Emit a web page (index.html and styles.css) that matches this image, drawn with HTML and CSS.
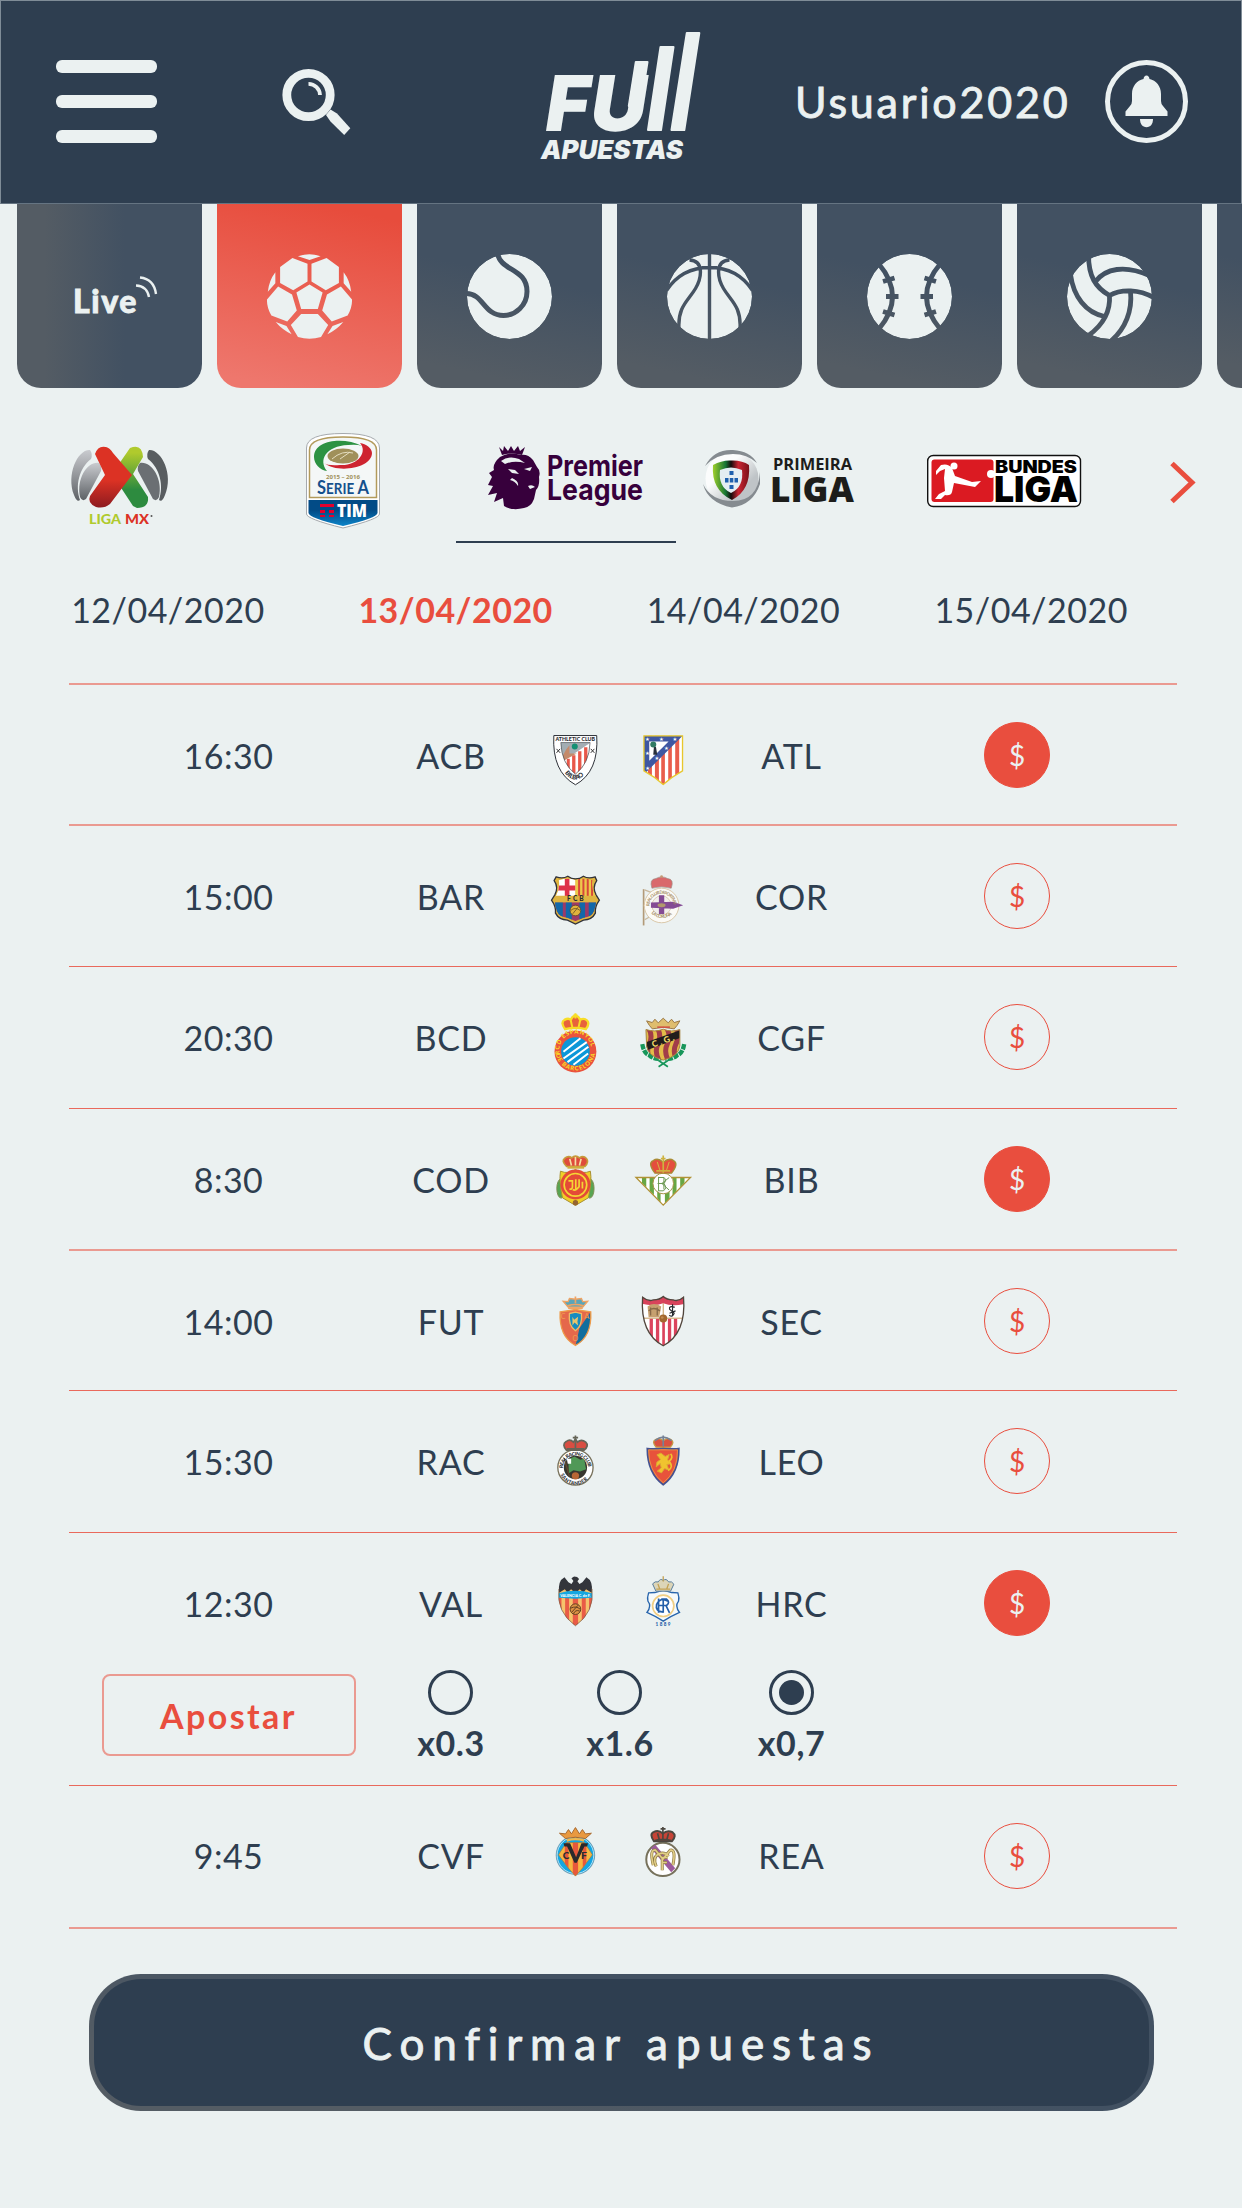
FILE: index.html
```html
<!DOCTYPE html>
<html lang="es">
<head>
<meta charset="utf-8">
<title>Full Apuestas</title>
<link rel="stylesheet" href="styles.css">
</head>
<body>
<header class="topbar">
  <button class="menu" aria-label="Menú"><span></span><span></span><span></span></button>
  <svg class="search" viewBox="280 66 74 72">
    <circle cx="308.5" cy="95" r="21.7" fill="none" stroke="#ebf1f1" stroke-width="8.8"/>
    <path d="M308.5 83.8A11.5 11.5 0 0 1 320 95" fill="none" stroke="#ebf1f1" stroke-width="3.8"/>
    <path d="M330.5 109.5L337 113.500L350.300 128.300L344.200 135L330.500 121.500L326 115Z" fill="#ebf1f1"/>
  </svg>
  <svg class="brand" viewBox="535 25 170 140" fill="#ebf1f1">
    <g transform="translate(546.500 131) skewX(-9)">
      <text class="brand-big" x="-4" y="0" textLength="44" lengthAdjust="spacingAndGlyphs">F</text>
      <text class="brand-big" x="41" y="0" textLength="56" lengthAdjust="spacingAndGlyphs">U</text>
    </g>
    <g stroke="#ebf1f1" stroke-width="2" stroke-linejoin="round">
      <path d="M635.800 62H647.500L640.500 106H628.800Z"/>
      <path d="M660.500 47H673.500L661 130H648Z"/>
      <path d="M686.800 33H699.300L684.300 130H671.500Z"/>
    </g>
    <text class="brand-small" x="541" y="158.500" textLength="142" lengthAdjust="spacingAndGlyphs">APUESTAS</text>
  </svg>
  <span class="user">Usuario2020</span>
  <svg class="bell" viewBox="1105 60 83 83" fill="#ebf1f1">
    <circle cx="1146.500" cy="101.500" r="39" fill="none" stroke="#ebf1f1" stroke-width="5"/>
    <path d="M1143.500 79Q1144 75.500 1146.500 75.500T1149.500 79C1156 80.500 1161 86 1161 94V101Q1161 104 1163 106L1167.500 111.500V116H1125.500V111.500L1130 106Q1132 104 1132 101V94C1132 86 1137 80.500 1143.500 79Z"/>
    <path d="M1140 119H1153C1153 124 1150.500 127.200 1146.500 127.200S1140 124 1140 119Z"/>
  </svg>
</header>

<nav class="sports">
  <a class="sport live"><span>Live</span>
    <svg viewBox="134 274 24 26" fill="none" stroke="#ebf1f1" stroke-width="2.400"><path d="M136 285.500Q147 286 149 297M140 277.500Q154 279 156 294"/></svg>
  </a>
  <a class="sport active">
    <svg class="ball" viewBox="675 175 214 256" preserveAspectRatio="none" fill="#ebf1f1">
      <path d="M753 182Q782 170 810 182L782 193ZM739 187L777 204V258L741 284L708 262V214ZM825 187L787 204V258L823 284L856 262V214ZM782 267L815 291L803 341H761L749 291ZM703 273L738 297L750 345L726 378L686 360Q674 335 675 312ZM861 273L826 297L814 345L838 378L878 360Q890 335 889 312ZM761 356H803L829 389L811 425Q782 435 753 425L735 389ZM696 230V263L677 289Q680 255 696 230ZM868 230V263L887 289Q884 255 868 230ZM697 380L724 392L737 417Q712 402 697 380ZM867 380L840 392L827 417Q852 402 867 380Z"/>
    </svg>
  </a>
  <a class="sport">
    <svg class="ball" viewBox="-42.500 -42.500 85 85">
      <mask id="tennis"><circle r="42.500" fill="#fff"/><path d="M-12 -44C-10 -25 17.500 -29 17.500 -5C17.500 9 6 19 -6 19C-26 19 -26 -3 -43 -3" fill="none" stroke="#000" stroke-width="5"/></mask>
      <circle r="42.500" fill="#ebf1f1" mask="url(#tennis)"/>
    </svg>
  </a>
  <a class="sport">
    <svg class="ball" viewBox="-42.500 -42.500 85 85">
      <mask id="basket"><circle r="42.500" fill="#fff"/><path d="M0 -43V43M-43 -6Q-28 -29 0 -29T43 -6M-20 -36.500C-5 -36 -8 -18 -14 -8C-21 4 -32 10 -30.500 32M20 -36.500C5 -36 8 -18 14 -8C21 4 32 10 30.500 32" fill="none" stroke="#000" stroke-width="3.400"/></mask>
      <circle r="42.500" fill="#ebf1f1" mask="url(#basket)"/>
    </svg>
  </a>
  <a class="sport">
    <svg class="ball" viewBox="-42.500 -42.500 85 85">
      <mask id="base"><circle r="42.500" fill="#fff"/><path d="M-31 -33Q-3 0 -31 33M31 -33Q3 0 31 33M-26.500 -15L-15 -18.500M-23.500 0H-11M-26.500 15L-15 18.500M26.500 -15L15 -18.500M23.500 0H11M26.500 15L15 18.500" fill="none" stroke="#000" stroke-width="4.800"/></mask>
      <circle r="42.500" fill="#ebf1f1" mask="url(#base)"/>
    </svg>
  </a>
  <a class="sport">
    <svg class="ball" viewBox="-42.500 -42.500 85 85">
      <mask id="volley"><circle r="42.500" fill="#fff"/><path d="M-21 -42C-21 -20 -14 -9 0 -1M-14 -15C-4 -28 15 -32 40 -21M0 -1C12 -8 30 -7 44 1M0 -1C1 14 -6 28 -21 39M-39 -22C-36 0 -24 16 -5 20M21 -5C23 14 16 32 2 44" fill="none" stroke="#000" stroke-width="4.800"/></mask>
      <circle r="42.500" fill="#ebf1f1" mask="url(#volley)"/>
    </svg>
  </a>
  <a class="sport"></a>
</nav>

<nav class="leagues">
  <svg class="mx" viewBox="70 425 100 110">
    <defs>
      <linearGradient id="mxr" x2="0" y2="1"><stop offset=".55" stop-color="#dc3224"/><stop offset="1" stop-color="#8d1b20"/></linearGradient>
      <linearGradient id="mxg" x2="0" y2="1"><stop offset=".1" stop-color="#b0ca2d"/><stop offset=".7" stop-color="#2d8b3f"/></linearGradient>
      <linearGradient id="mxs" x2="0" y2="1"><stop stop-color="#c9cbcf"/><stop offset="1" stop-color="#5e6266"/></linearGradient>
    </defs>
    <path d="M90 450C78 449 66 474 74 495Q77 503 80 500C75 486 79 468 91 459Q93 454 90 450Z" fill="url(#mxs)"/>
    <path d="M99 463C88 461 76 478 80 497Q82 502 86 499L101 471Q102 466 99 463Z" fill="url(#mxs)"/>
    <path d="M149 450C161 449 174 474 165 495Q162 503 159 500C164 486 160 468 148 459Q146 454 149 450Z" fill="#585d60"/>
    <path d="M140 463C151 461 163 478 159 497Q157 502 153 499L138 471Q137 466 140 463Z" fill="#6b6f73"/>
    <path d="M130 448Q142 443 143 457L133 474L148 497Q149 508 137 508L133 506L112 474Z" fill="url(#mxg)"/>
    <path d="M95 454Q98 445 106 447Q110 448 113 453L132 475L110 504Q104 509 96 507Q87 503 90 496L105 475Z" fill="url(#mxr)"/>
    <text x="89" y="524" class="mxt" fill="#b0ca2d" textLength="32" lengthAdjust="spacingAndGlyphs">LIGA</text>
    <text x="125" y="524" class="mxt" fill="#dc3224" textLength="24" lengthAdjust="spacingAndGlyphs">MX</text>
    <circle cx="151.500" cy="516" r="1" fill="#555"/>
  </svg>
  <svg class="seriea" viewBox="300 425 90 110">
    <defs><linearGradient id="tim" x2="0" y2="1"><stop offset=".4" stop-color="#024b86"/><stop offset="1" stop-color="#0c84c9"/></linearGradient></defs>
    <path d="M306.500 448Q306.500 433.500 343 433.500T379.500 448V514Q379.500 519 343 528Q306.500 519 306.500 514Z" fill="#fff" stroke="#a5a9ad"/>
    <path d="M309.500 450Q309.500 437 343 437T376.500 450V497.500H309.500Z" fill="#f4f7f7" stroke="#b29a5b" stroke-width="1.500"/>
    <path d="M308.500 500H377.500V513Q377 518 343 526Q309 518 308.500 513Z" fill="url(#tim)"/>
    <path d="M362 446C345 437 314 439 314 457C314 464 320 470 327 471C318 460 326 446 348 445Q357 444 362 446Z" fill="#2c9242"/>
    <path d="M324 463C338 474 372 468 372 453C372 448 366 444 360 443C368 452 358 466 340 465Q328 466 324 463Z" fill="#ce2430"/>
    <ellipse cx="343" cy="456" rx="15.500" ry="7.500" fill="#a0905a"/>
    <path d="M332 459Q342 450 353 453M340 459L350 452" stroke="#e5dec1" fill="none"/>
    <text x="326" y="479" class="yr" fill="#a0905a" textLength="34" lengthAdjust="spacingAndGlyphs">2015 – 2016</text>
    <text x="317" y="493.500" class="sa" fill="#14508c" textLength="52" lengthAdjust="spacingAndGlyphs">S<tspan class="sa2">ERIE</tspan> A</text>
    <path d="M320 504H334V507H320ZM320 510H325V513H320ZM329 510H334V513H329ZM320 515H325V517H320ZM329 515H334V517H329Z" fill="#e3002d"/>
    <text x="337" y="516.500" class="timt" fill="#fff" textLength="30" lengthAdjust="spacingAndGlyphs">TIM</text>
  </svg>
  <div class="league-current">
    <svg viewBox="480 435 170 90" fill="#37003c">
      <path d="M499 447L503 451L504 446L508 451L511 446L514 451L518 446L520 451L525 447L522 455Q512 452 502 455Z"/>
      <path d="M500 457Q510 451 521 455Q528 454 533 460L537 467Q541 471 539 477Q540 486 536 490L534 499Q531 507 524 508Q512 511 504 506L503 498L494 502L497 493L488 495L493 486L488 485L492 477L489 473L494 470Q492 464 500 457Z"/>
      <path d="M501 461Q509 455 519 459L525 463Q514 460 505 464ZM508 469L515 470L519 474L512 473ZM524 469L532 467L530 471ZM512 478Q519 481 518 486Q515 481 510 480ZM528 486Q532 484 535 487L530 489Z" fill="#ebf1f1"/>
      <text x="547" y="476" class="pl" textLength="96" lengthAdjust="spacingAndGlyphs">Premier</text>
      <text x="547" y="500" class="pl" textLength="96" lengthAdjust="spacingAndGlyphs">League</text>
    </svg>
  </div>
  <svg class="primeira" viewBox="700 435 160 90">
    <defs><linearGradient id="pt"><stop stop-color="#9fd02c"/><stop offset=".35" stop-color="#167534"/><stop offset=".5" stop-color="#150b0b"/><stop offset=".7" stop-color="#c92532"/><stop offset="1" stop-color="#7a1018"/></linearGradient>
    <linearGradient id="ps" x2="1" y2="1"><stop offset=".35" stop-color="#fbfcfc"/><stop offset=".7" stop-color="#bfc4c7"/></linearGradient></defs>
    <circle cx="732" cy="478.500" r="26.500" fill="url(#ps)"/>
    <path d="M705 466Q714 449 733 450Q750 451 757 463Q747 454 733 454Q716 454 705 466ZM703 484Q708 503 732 507.500Q753 505 760 484V472Q758 501 733 501Q711 501 703 484Z" fill="#858b90"/>
    <path d="M713 465Q722 460 731 460.500Q742 460 749 465Q751 490 732 500Q711 490 713 465Z" fill="url(#pt)"/>
    <path d="M720 470Q731 465 742 470Q744 487 731 493Q718 487 720 470Z" fill="#e4edf2"/>
    <path d="M729.500 471H733.500V475H729.500ZM725 478H728.500V482.500H725ZM729.800 478H733.300V482.500H729.800ZM734.500 478H738V482.500H734.500ZM729.500 485H733.500V489H729.500Z" fill="#1d5fad"/>
    <text x="773" y="470" class="pr1" fill="#1d1d1b" textLength="79" lengthAdjust="spacingAndGlyphs">PRIMEIRA</text>
    <text x="770" y="501.500" class="pr2" fill="#1d1d1b" textLength="84" lengthAdjust="spacingAndGlyphs">LIGA</text>
  </svg>
  <svg class="bundes" viewBox="920 445 170 70">
    <rect x="927.700" y="455.500" width="152.800" height="51" rx="5.500" fill="#fff" stroke="#111" stroke-width="1.400"/>
    <rect x="931.500" y="459.500" width="62" height="42.500" rx="3" fill="#db1a22"/>
    <g fill="#fff"><circle cx="954" cy="466" r="3.500"/><circle cx="991" cy="474" r="4"/>
    <path d="M941 465Q948 463 952 468L955 476L972 482L981 481L975 487L954 483L952 492Q951 496 945 495L941 499L935 499L939 494L945 491L944 478L945 469L940 471L936 475L936 471Z"/></g>
    <text x="995" y="472.500" class="bu1" textLength="82" lengthAdjust="spacingAndGlyphs">BUNDES</text>
    <text x="994" y="502" class="bu2" textLength="84" lengthAdjust="spacingAndGlyphs">LIGA</text>
  </svg>
  <svg class="next" viewBox="1165 455 40 55"><path d="M1173 463.500L1193 482.500L1173 501.500" fill="none" stroke="#e94e3e" stroke-width="5"/></svg>
</nav>

<nav class="dates"><a>12/04/2020</a><a class="active">13/04/2020</a><a>14/04/2020</a><a>15/04/2020</a></nav>

<main class="matches">
  <section class="match soft">
    <time>16:30</time><span>ACB</span>
    <svg class="crests" viewBox="45 -49 510 424">
      <clipPath id="ac"><path d="M122 127H210Q208 190 166 222Q124 190 122 127Z"/></clipPath>
      <path d="M101 106H230Q237 215 166 254Q95 215 101 106Z" fill="#fff" stroke="#2d3138" stroke-width="3"/>
      <g clip-path="url(#ac)"><path d="M120 125H212V230H120Z" fill="#a3adb3"/><path d="M212 127L130 182V230H212Z" fill="#fff"/><path d="M140 176h9v50h-9zM156 165h10v65h-10zM174 153h10v70h-10zM192 141h10v70h-10z" fill="#e8584a"/><path d="M122 178L138 148L148 135V160L170 160L130 182Z" fill="#c48a6b"/><circle cx="164" cy="139" r="9" fill="#159074"/></g>
      <path d="M122 127H210Q208 190 166 222Q124 190 122 127Z" fill="none" stroke="#43474d" stroke-width="2"/>
      <text class="crest-t" x="106" y="122" font-size="16" textLength="119" lengthAdjust="spacingAndGlyphs">ATHLETIC CLUB</text>
      <path id="bil" d="M128 210Q166 268 205 208" fill="none"/><text class="crest-t" font-size="19"><textPath href="#bil" startOffset="10">BILBAO</textPath></text>
      <path d="M109 146L120 158M120 146L109 158M212 146L223 158M223 146L212 158" stroke="#333" stroke-width="3"/>
      <clipPath id="at"><path d="M371 106H489V212Q455 230 430 254Q405 230 371 212Z"/></clipPath>
      <g clip-path="url(#at)"><path d="M371 106H489V254H371Z" fill="#fff"/><path d="M384 106h12v150h-12zM405 106h12v150h-12zM424 106h11v150h-11zM445 106h11v150h-11zM466 106h12v150h-12z" fill="#e95d4b"/><path d="M371 106H489L371 224Z" fill="#3f57a1"/><path d="M388 124H446L388 182Z" fill="#fff"/><path d="M402 140H408L412 164H400Z" fill="#29303b"/><circle cx="400" cy="133" r="9" fill="#337b64"/>
      <text fill="#fff" font-size="16" font-family="DejaVu Sans"><tspan x="375" y="122">★</tspan><tspan x="417" y="122">★</tspan><tspan x="458" y="122">★</tspan><tspan x="375" y="165">★</tspan><tspan x="432" y="151">★</tspan><tspan x="404" y="181">★</tspan><tspan x="376" y="209">★</tspan></text></g>
      <path d="M372 107H488V212Q455 230 430 253Q405 230 372 212Z" fill="none" stroke="#e8c72d" stroke-width="4"/>
    </svg>
    <span>ATL</span><button class="bet on">$</button>
  </section>
  <section class="match soft">
    <time>15:00</time><span>BAR</span>
    <svg class="crests" viewBox="45 375 510 424">
      <clipPath id="ba"><path d="M116 541Q145 532 166 541Q187 532 217 541Q212 565 226 587Q233 604 221 635Q215 651 190 654L166 664L142 654Q117 651 111 635Q99 604 108 587Q120 565 116 541Z"/></clipPath>
      <path d="M108 531Q128 538 143 529Q154 537 166 537Q180 537 190 529Q204 538 225 531L230 542Q216 562 228 585L238 601Q224 620 226 640Q216 660 190 661L166 673L142 661Q116 660 106 640Q108 620 94 601L104 585Q116 562 102 542Z" fill="#dfb440" stroke="#30323a" stroke-width="4"/>
      <g clip-path="url(#ba)"><path d="M100 530H166V590H100Z" fill="#fff"/><path d="M134 530h14v60h-14zM100 557h66v15h-66z" fill="#de3149"/><path d="M166 530H235V590H166Z" fill="#edc94b"/><path d="M174 530h6v60h-6zM187 530h6v60h-6zM200 530h6v60h-6zM213 530h6v60h-6z" fill="#d8483a"/><path d="M95 607H238V670H95Z" fill="#9c3a67"/><path d="M95 607h33v70H95zM137 607h18v70h-18zM178 607h17v70h-17zM206 607h32v70h-32z" fill="#1268a9"/><path d="M95 588H238V607H95Z" fill="#dfb440"/></g>
      <circle cx="166" cy="632" r="16" fill="#e0b23d" stroke="#4d3c1f" stroke-width="2"/><path d="M152 632Q165 620 180 632M158 642L174 622" fill="none" stroke="#4d3c1f" stroke-width="2"/>
      <text class="crest-t" x="141" y="605" font-size="20" textLength="50">FCB</text>
      <path d="M371 568V677" stroke="#b29a78" stroke-width="5"/>
      <path d="M374 570L395 578M374 660L400 645" stroke="#c9b89e" stroke-width="4"/>
      <circle cx="425" cy="617" r="52" fill="#fbfaf6" stroke="#d9c8aa" stroke-width="3"/><circle cx="425" cy="617" r="29" fill="#f2efeb" stroke="#cdbc9c" stroke-width="2"/>
      <path d="M417 586h16v57h-16zM393 608L460 606L490 616L460 627L393 624Z" fill="#844b94"/><ellipse cx="425" cy="616" rx="12" ry="6" fill="#b19a6c"/>
      <path id="co" d="M388 619A37 37 0 0 1 462 619" fill="none"/><text font-size="13" font-weight="700" fill="#a58b62"><textPath href="#co" textLength="112">REAL CLUB DEPORTIVO</textPath></text>
      <path id="co2" d="M394 640A44 44 0 0 0 460 640" fill="none"/><text font-size="14" font-weight="700" fill="#a58b62"><textPath href="#co2" textLength="70">LA CORUÑA</textPath></text>
      <path d="M396 565Q387 538 408 536Q425 526 443 536Q464 538 454 565Q425 557 396 565Z" fill="#d9696b" stroke="#9b8b82" stroke-width="2"/><circle cx="425" cy="530" r="4" fill="#c69a74"/>
    </svg>
    <span>COR</span><button class="bet">$</button>
  </section>
  <section class="match">
    <time>20:30</time><span>BCD</span>
    <svg class="crests" viewBox="45 800 510 424">
      <path d="M135 990Q120 970 133 962Q145 955 152 962Q157 950 166 950Q175 950 180 962Q192 955 201 964Q210 974 197 990Q166 982 135 990Z" fill="#e8633c" stroke="#f8dd26" stroke-width="7"/><path d="M152 964L157 986M180 964L175 986M166 942V958M160 948H172" stroke="#f8dd26" stroke-width="6"/>
      <circle cx="166" cy="1057" r="63" fill="#ea533d"/><circle cx="166" cy="1057" r="43" fill="#0b97d8"/><path d="M130 1058L181 1017M130 1078L200 1029M142 1089L205 1043M160 1097L204 1063" stroke="#fff" stroke-width="6"/>
      <path id="es" d="M120 1065A48 48 0 1 1 212 1065" fill="none"/><text font-size="18" font-weight="900" fill="#f9df25"><textPath href="#es" textLength="155">RCD ESPANYOL</textPath></text>
      <path id="es2" d="M107 1065A60 60 0 0 0 225 1065" fill="none"/><text font-size="18" font-weight="900" fill="#f9df25"><textPath href="#es2" textLength="168">DE BARCELONA</textPath></text>
      <clipPath id="cg"><path d="M378 991Q405 1000 430 990Q455 1000 480 991V1040Q478 1070 430 1083Q382 1070 380 1040Z"/></clipPath>
      <path d="M367 1035Q372 1064 388 1068Q402 1082 424 1078M493 1035Q488 1064 472 1068Q458 1082 436 1078" stroke="#17965a" stroke-width="13" fill="none" stroke-dasharray="16 3"/><path d="M416 1103L444 1084M444 1103L416 1084" stroke="#17965a" stroke-width="5"/>
      <g clip-path="url(#cg)"><path d="M370 985H490V1090H370Z" fill="#e3bd49"/><path d="M385 985Q400 1010 388 1035T394 1090M412 985Q426 1010 414 1035T420 1090M440 985Q454 1010 442 1035T448 1090M468 985Q480 1010 468 1035T474 1090" stroke="#a23d49" stroke-width="15" fill="none"/><path d="M378 1029L482 993V1016L378 1054Z" fill="#211d1b"/></g><path d="M378 991Q405 1000 430 990Q455 1000 480 991V1040Q478 1070 430 1083Q382 1070 380 1040Z" fill="none" stroke="#a78440" stroke-width="3"/>
      <text x="399" y="1045" font-size="26" font-weight="900" fill="#f5dc6a" transform="rotate(-19 400 1045)" textLength="70">C.G.</text>
      <path d="M397 989Q388 980 380 965L397 970L405 960L415 971L430 957L445 971L455 960L463 970L480 965Q472 980 463 989Q430 980 397 989Z" fill="#dfbd6d" stroke="#9b7846" stroke-width="3"/><path d="M412 984H450" stroke="#cf5645" stroke-width="5"/>
    </svg>
    <span>CGF</span><button class="bet">$</button>
  </section>
  <section class="match">
    <time>8:30</time><span>COD</span>
    <svg class="crests" viewBox="45 -35 510 424">
      <ellipse cx="123" cy="207" rx="13" ry="29" fill="#57a552" stroke="#7c8c50" stroke-width="3"/><ellipse cx="209" cy="207" rx="13" ry="29" fill="#57a552" stroke="#7c8c50" stroke-width="3"/>
      <path d="M121 155Q145 165 166 150Q188 165 211 155Q216 185 205 235L166 258L127 235Q116 185 121 155Z" fill="#f0cf27" stroke="#a89033" stroke-width="3"/>
      <circle cx="166" cy="195" r="45" fill="#e44b37"/><circle cx="166" cy="196" r="34" fill="none" stroke="#f5d634" stroke-width="5"/><path d="M145 184H157V202Q157 210 148 209M167 179V212M177 179V202Q166 216 158 210M187 187V207" fill="none" stroke="#f5d634" stroke-width="5"/>
      <circle cx="166" cy="250" r="8" fill="#95652f"/>
      <path d="M140 141Q122 124 134 116Q145 107 155 115Q166 104 178 115Q190 107 199 117Q208 128 194 141Z" fill="#df4b3b" stroke="#c69b3a" stroke-width="5"/><path d="M142 144H192" stroke="#d2ad3d" stroke-width="7"/><path d="M149 118L154 138M183 118L178 138M166 112V138" stroke="#f5dfa3" stroke-width="5"/>
      <clipPath id="be"><path d="M350 174H510L430 256Z"/></clipPath>
      <g clip-path="url(#be)"><path d="M345 170H515V260H345Z" fill="#fff"/><path d="M366 170h13v90h-13zM389 170h13v90h-13zM412 170h10v90h-10zM435 170h14v90h-14zM458 170h12v90h-12zM481 170h13v90h-13z" fill="#68a744"/></g><path d="M348 174H512L430 257Z" fill="none" stroke="#b19236" stroke-width="4"/>
      <circle cx="430" cy="192" r="31" fill="#fff" stroke="#a8944a" stroke-width="3"/><path d="M416 172V214M416 174H432Q442 182 432 192H413M432 192Q444 206 430 214H414M432 174V210M448 174L426 192L448 212" fill="none" stroke="#6d9b54" stroke-width="3"/>
      <path d="M405 161Q382 130 400 123Q414 113 430 128Q448 113 461 123Q478 132 455 161Z" fill="#e44e3d" stroke="#a98c36" stroke-width="4"/><path d="M430 108V160M409 154H451M423 117H437" stroke="#ceb33f" stroke-width="5"/><path d="M412 127L420 152M448 127L440 152" stroke="#d4b544" stroke-width="3"/>
    </svg>
    <span>BIB</span><button class="bet on">$</button>
  </section>
  <section class="match soft">
    <time>14:00</time><span>FUT</span>
    <svg class="crests" viewBox="45 390 510 424">
      <clipPath id="os"><path d="M120 576Q145 573 166 569Q187 573 212 576Q216 650 166 677Q116 650 120 576Z"/></clipPath>
      <g clip-path="url(#os)"><path d="M110 565H220V680H110Z" fill="#e5684b"/><path d="M178 625L220 565V680H166Z" fill="#126e9d"/></g><path d="M120 576Q145 573 166 569Q187 573 212 576Q216 650 166 677Q116 650 120 576Z" fill="none" stroke="#ee9c4b" stroke-width="4"/>
      <path d="M148 581L166 577L184 581Q188 618 166 633Q144 618 148 581Z" fill="#168cc0" stroke="#efba65" stroke-width="4"/><path d="M157 591L162 600L174 591L172 606L174 617L163 608L157 617Z" fill="#e9c56c"/>
      <g font-size="21" fill="#efa14f"><text x="122" y="599">C</text><text x="193" y="599">A</text><text x="157" y="664">O</text></g>
      <path d="M144 562L129 544L144 545L148 536L166 538L184 536L188 545L203 544L188 562Z" fill="#59a5ba" stroke="#efa363" stroke-width="4"/><path d="M142 558Q166 550 190 558M144 565H188M166 530V550" stroke="#efa363" stroke-width="5" fill="none"/>
      <clipPath id="se"><path d="M368 532Q385 546 400 540Q420 540 430 530Q440 540 460 540Q475 546 491 532Q500 640 430 678Q360 640 368 532Z"/></clipPath>
      <g clip-path="url(#se)"><path d="M360 525H500V680H360Z" fill="#fff"/><path d="M360 525H500V550Q460 562 430 550Q400 562 360 550Z" fill="#d8435b"/><path d="M389 597h10v90h-10zM408 597h10v90h-10zM427 597h8v90h-8zM444 597h10v90h-10zM462 597h10v90h-10z" fill="#db435d"/><path d="M430 550V597M370 595H490" stroke="#c59a5c" stroke-width="3"/><path d="M383 560Q401 545 424 560L418 592H386Z" fill="#c6a06f"/><path d="M386 573Q400 559 420 573M392 587V563M412 587V563" stroke="#866847" stroke-width="4" fill="none"/></g>
      <path d="M465 562Q446 557 449 568L463 580Q459 594 448 586M458 553V588M449 580L467 573" fill="none" stroke="#25282c" stroke-width="3.500"/><circle cx="430" cy="596" r="12" fill="#a2682f"/><circle cx="427" cy="593" r="4" fill="#c18b51"/>
      <path d="M368 532Q385 546 400 540Q420 540 430 530Q440 540 460 540Q475 546 491 532Q500 640 430 678Q360 640 368 532Z" fill="none" stroke="#51453c" stroke-width="4"/>
    </svg>
    <span>SEC</span><button class="bet">$</button>
  </section>
  <section class="match">
    <time>15:30</time><span>RAC</span>
    <svg class="crests" viewBox="45 813 510 424">
      <circle cx="166" cy="1046" r="53" fill="#fff" stroke="#77715b" stroke-width="4"/><circle cx="166" cy="1046" r="35" fill="#38372f"/>
      <path d="M145 1021L163 1013L181 1023L192 1020L198 1051L180 1058L160 1054L146 1063Z" fill="#509857"/><path d="M132 1018L148 1073" stroke="#62472e" stroke-width="4"/><path d="M140 1020L153 1020V1035H143Z" fill="#fff"/><circle cx="166" cy="1071" r="11" fill="#b86736"/>
      <path id="rc" d="M128 1048A38 38 0 0 1 204 1048" fill="none"/><text class="crest-t" font-size="15"><textPath href="#rc" textLength="116">REAL RACING CLUB</textPath></text>
      <path id="rc2" d="M121 1067A48 48 0 0 0 211 1067" fill="none"/><text class="crest-t" font-size="15"><textPath href="#rc2" textLength="100">SANTANDER</textPath></text>
      <path d="M139 994Q124 977 138 968Q150 959 160 970L166 960L172 970Q184 959 197 970Q208 981 192 994Z" fill="#d84e42" stroke="#656558" stroke-width="5"/><path d="M166 950V992M158 956H174M140 990H192" stroke="#656558" stroke-width="5"/>
      <path d="M382 989Q405 992 430 987Q455 992 477 989Q478 1063 430 1098Q382 1063 382 989Z" fill="#e8523b" stroke="#445391" stroke-width="5"/><path d="M386 993H473Q474 1058 430 1092Q386 1058 386 993Z" fill="none" stroke="#e9b24b" stroke-width="2"/>
      <path d="M411 1008L423 1003L436 1013L448 1007L443 1023L453 1035L441 1037L447 1054L434 1049L425 1062L412 1057L424 1047L421 1034L409 1044L411 1030L422 1022Z" fill="#f0c42f" stroke="#dbac31" stroke-width="3"/><path d="M445 1055Q462 1045 448 1027Q462 1015 452 1005" fill="none" stroke="#f0c42f" stroke-width="5"/>
      <path d="M409 985Q394 968 407 962Q419 955 430 966Q441 955 453 962Q466 970 451 985Z" fill="#d85141" stroke="#c59a45" stroke-width="4"/><path d="M405 965Q430 945 455 965M430 950V983" fill="none" stroke="#758296" stroke-width="5"/>
    </svg>
    <span>LEO</span><button class="bet">$</button>
  </section>
  <section class="match open">
    <time>12:30</time><span>VAL</span>
    <svg class="crests" viewBox="45 -81 510 424">
      <clipPath id="va"><path d="M116 90Q166 78 216 90Q224 160 166 201Q108 160 116 90Z"/></clipPath>
      <g clip-path="url(#va)"><path d="M110 80H222V205H110Z" fill="#f6c26c"/><path d="M112 117h12v90h-12zM135 117h12v90h-12zM158 117h16v90h-16zM185 117h12v90h-12zM207 117h12v90h-12z" fill="#e95b46"/></g>
      <path d="M117 102Q112 66 133 55L145 70L154 75L160 66L154 58L162 53L171 54L177 60L172 67L178 75L187 70L199 55Q220 66 215 102L198 91L190 101L179 91L166 103L153 91L142 101L134 91Z" fill="#33353b"/>
      <path d="M116 103Q166 88 216 103V117Q166 122 116 117Z" fill="#16a7e1"/><text x="120" y="114" font-size="12" font-weight="900" fill="#fff" textLength="91" lengthAdjust="spacingAndGlyphs">VALENCIA C. de F.</text>
      <circle cx="166" cy="151" r="16" fill="#dd9144" stroke="#644020" stroke-width="3"/><path d="M152 148Q168 140 180 151M155 160L174 139M160 165Q166 151 179 157" stroke="#644020" stroke-width="3" fill="none"/><path d="M116 90Q108 160 166 201Q224 160 216 90" fill="none" stroke="#6b5146" stroke-width="2"/>
      <path d="M386 102L405 101L430 94L455 101L474 102Q479 117 476 127Q464 142 479 161Q456 171 430 187Q404 171 381 161Q396 142 384 127Q381 117 386 102Z" fill="#f5fafc" stroke="#2865ac" stroke-width="4"/><circle cx="430" cy="141" r="32" fill="#fff" stroke="#f1ce83" stroke-width="5"/>
      <g fill="none" stroke="#245fa9" stroke-width="5"><path d="M416 119V162M430 119V162M416 140H430H440Q452 130 440 121H424M438 140L449 162M443 127Q421 113 410 137Q405 158 430 160"/></g>
      <path d="M408 97L398 75Q405 66 415 69Q422 57 430 65Q439 57 446 69Q456 66 462 76L452 97Z" fill="#dcd5b8" stroke="#587c9b" stroke-width="3"/><path d="M430 52V68M409 91H451M414 75L420 92M446 75L440 92" stroke="#c3a254" stroke-width="4"/>
      <text x="407" y="202" font-size="14" font-weight="900" fill="#245fa9" textLength="45">1889</text>
    </svg>
    <span>HRC</span><button class="bet on">$</button>
    <button class="place">Apostar</button>
    <label class="odd"><i></i><b>x0.3</b></label>
    <label class="odd"><i></i><b>x1.6</b></label>
    <label class="odd checked"><i></i><b>x0,7</b></label>
  </section>
  <section class="match">
    <time>9:45</time><span>CVF</span>
    <svg class="crests" viewBox="45 678 510 424">
      <circle cx="166" cy="889" r="58" fill="#14a6e2" stroke="#6c8898" stroke-width="2"/><circle cx="166" cy="889" r="55" fill="none" stroke="#fff" stroke-width="2"/>
      <clipPath id="vi"><path d="M139 851H193L217 888L188 927L166 952L144 927L115 888Z"/></clipPath><g clip-path="url(#vi)"><path d="M110 845H220V955H110Z" fill="#f6b740"/><path d="M134 845h11v110h-11zM158 845h16v110h-16zM188 845h11v110h-11z" fill="#e8583b"/></g><path d="M139 851H193L217 888L188 927L166 952L144 927L115 888Z" fill="none" stroke="#a47a3a" stroke-width="2"/>
      <path d="M130 853H150L168 895L184 853H204L201 863H193L170 912H163L141 863H133Z" fill="#292a2c"/><g class="crest-t" font-size="30"><text x="128" y="900" textLength="20" lengthAdjust="spacingAndGlyphs">C</text><text x="183" y="900" textLength="18" lengthAdjust="spacingAndGlyphs">F</text></g>
      <path d="M136 839L118 823L136 825L145 812L154 825L166 806L178 825L187 812L196 825L214 823L196 839Q166 831 136 839Z" fill="#e99940" stroke="#a9682d" stroke-width="3"/><path d="M140 845Q166 837 192 845" fill="none" stroke="#f1b84e" stroke-width="7"/>
      <circle cx="429" cy="902" r="50" fill="#fff" stroke="#77725c" stroke-width="6"/><path d="M393 868L406 858L466 928L454 940Z" fill="#9b5a9c"/>
      <g fill="none" stroke="#8c7943" stroke-width="9"><path d="M400 919Q388 870 407 874L429 901L451 874Q469 870 459 919M409 923Q396 895 417 885Q434 878 446 892M427 895V934M427 896H443M427 911H441"/></g><g fill="none" stroke="#e1cd86" stroke-width="5"><path d="M400 919Q388 870 407 874L429 901L451 874Q469 870 459 919M409 923Q396 895 417 885Q434 878 446 892M427 895V934M427 896H443M427 911H441"/></g>
      <path d="M402 847Q387 825 402 819Q416 812 429 824Q442 812 458 820Q472 830 456 847Z" fill="#c74437" stroke="#4c4740" stroke-width="6"/><path d="M429 804V845M422 810H437M405 845Q429 838 453 845M413 823L418 842M446 823L441 842" stroke="#4c4740" stroke-width="5" fill="none"/>
    </svg>
    <span>REA</span><button class="bet">$</button>
  </section>
</main>
<button class="confirm">Confirmar apuestas</button>
</body>
</html>
```
FILE: styles.css
```css
* { box-sizing: border-box; }
body { margin: 0; width: 1242px; height: 2208px; overflow: hidden; background: #ebf1f1; color: #2e3e50; font-family: Lato, "Noto Sans", sans-serif; display: flex; flex-direction: column; }
button { font: inherit; color: inherit; background: none; border: 0; padding: 0; }
svg { display: block; flex: none; overflow: visible; }
svg text { letter-spacing: 0; }

.topbar { flex: none; height: 204px; background: #2e3e50; border: 1px solid #7f8c97; border-bottom-color: #657482; display: flex; align-items: center; padding: 0 0 1px 55px; }
.menu { width: 101px; display: flex; flex-direction: column; gap: 22px; }
.menu span { height: 13px; border-radius: 6px; background: #ebf1f1; }
.search { width: 74px; height: 72px; margin-left: 123px; }
.brand { width: 170px; height: 140px; margin: -14px 0 0 181px; }
.brand-big { font: 900 77px Inter, sans-serif; }
.brand-small { font: italic 900 25.5px Inter, sans-serif; }
.user { margin-left: 90px; width: 310px; font-size: 43px; font-weight: 400; letter-spacing: 2.8px; color: #ebf1f1; -webkit-text-stroke: .9px #ebf1f1; white-space: nowrap; }
.bell { width: 83px; height: 83px; }

.sports { flex: none; height: 184px; padding-left: 17px; display: flex; gap: 15px; overflow: hidden; }
.sport { flex: none; width: 185px; height: 184px; border-radius: 0 0 24px 24px; background: linear-gradient(192deg, #425162 40%, #545c64 88%); display: flex; align-items: center; justify-content: center; }
.sport.active { background: linear-gradient(192deg, #e74c3c 8%, #ee776d 94%); }
.sport.live { background: linear-gradient(90deg, #545c64 15%, #425162 58%); color: #ebf1f1; justify-content: flex-start; padding-left: 56px; font-size: 32px; font-weight: 900; letter-spacing: 1.6px; -webkit-text-stroke: .8px #ebf1f1; }
.sport.live span { margin-top: 8px; width: 61px; }
.sport.live svg { width: 24px; height: 26px; margin-top: -18px; }
.ball { width: 85px; height: 85px; }

.leagues { flex: none; height: 155px; padding: 37px 0 0 70px; display: flex; align-items: flex-start; }
.mx { width: 100px; height: 110px; }
.seriea { width: 90px; height: 110px; margin-left: 130px; }
.league-current { margin: 10px 0 0 66px; width: 220px; height: 108px; border-bottom: 2px solid #2e3e50; padding-left: 24px; }
.league-current svg { width: 170px; height: 90px; }
.primeira { width: 160px; height: 90px; margin: 10px 0 0 24px; }
.bundes { width: 170px; height: 70px; margin: 20px 0 0 60px; }
.next { width: 40px; height: 55px; margin: 30px 0 0 74px; }
.mxt { font: 900 12.5px Lato, sans-serif; }
.yr { font: 700 5px "Open Sans", sans-serif; }
.sa { font: 700 19px Lato, sans-serif; }
.sa2 { font-size: 15.5px; }
.timt { font: 800 17px "Open Sans", sans-serif; }
.pl { font: 700 29px Inter, sans-serif; }
.pr1 { font: 700 16px "Open Sans", sans-serif; }
.pr2 { font: 800 35px "Open Sans", sans-serif; }
.bu1 { font: 900 17px Inter, sans-serif; }
.bu2 { font: 900 36px Inter, sans-serif; }
.crest-t { font-weight: 900; fill: #292c31; }

.dates { flex: none; height: 140px; padding: 35px 67px 0 24px; display: grid; grid-template-columns: repeat(4, 1fr); font-size: 34px; line-height: 64px; letter-spacing: .5px; text-align: center; }
.dates .active { color: #e94e3e; font-weight: 700; }

.matches { flex: none; margin: 0 65px 0 69px; border-bottom: 2px solid #ea9a91; }
.match { height: 142px; display: grid; grid-template-columns: 317px 130px 208px 135px 316px; grid-template-rows: 141px; justify-items: center; align-items: center; border-top: 1px solid #e9695c; font-size: 34px; letter-spacing: .8px; }
.match.soft { border-top: 2px solid #ea9a91; height: 141px; }
.match:nth-child(2) { height: 142px; }
.match:nth-child(4) { height: 141px; }
.match time { padding-left: 2px; letter-spacing: .5px; }
.match:last-child time, .match:last-child span { padding-bottom: 3px; }
.match.open { height: 253px; grid-template-rows: 141px 94px; }
.crests { width: 170px; height: 141px; margin-top: -2px; }
.bet { width: 66px; height: 66px; margin-top: -2px; border-radius: 50%; border: 1.5px solid #e94e3e; color: #e94e3e; font-size: 28px; letter-spacing: 0; }
.bet.on { background: #e94e3e; color: #ebf1f1; }
.place { width: 254px; height: 82px; align-self: start; margin-left: 2px; border: 2px solid #ea9a91; border-radius: 8px; color: #e94e3e; font-weight: 700; letter-spacing: 2.4px; }
.odd { align-self: start; margin-top: -4px; display: flex; flex-direction: column; align-items: center; line-height: 34px; letter-spacing: .6px; }
.odd i { width: 45px; height: 45px; border: 3px solid #2e3e50; border-radius: 50%; margin-bottom: 11px; padding: 7px; }
.odd.checked i::before { content: ""; display: block; width: 25px; height: 25px; border-radius: 50%; background: #2e3e50; }

.confirm { flex: none; width: 1065px; height: 137px; margin: 45px 0 0 88.5px; border: 5px solid transparent; border-radius: 52px; background: linear-gradient(#2e3e50, #2e3e50) padding-box, linear-gradient(192deg, #425162 40%, #545c64 80%) border-box; color: #ebf1f1; font-size: 44px; font-weight: 400; letter-spacing: 7.9px; -webkit-text-stroke: .9px #ebf1f1; }
```
